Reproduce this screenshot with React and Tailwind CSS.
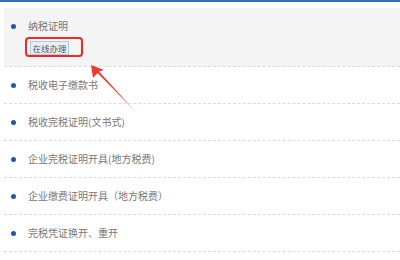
import React from 'react';

const rows = [
  '税收电子缴款书',
  '税收完税证明(文书式)',
  '企业完税证明开具(地方税费)',
  '企业缴费证明开具（地方税费）',
  '完税凭证换开、重开',
];

const Bullet = () => <span className="w-[5px] h-[5px] rounded-full bg-[#2356a8] shrink-0" />;

const App = () => {
  return (
    <div className="relative w-[400px] h-[260px] bg-white overflow-hidden" style={{ fontFamily: '"Noto Sans CJK SC", "Noto Sans", sans-serif' }}>
      <div className="h-[2px] bg-[#3a69b8]" />

      <div className="mt-[6px] ml-[4px]">
        {/* first item, highlighted */}
        <div className="bg-[#f4f4f4] h-[59px] border-b border-dashed border-[#dcdcdc] pl-[7px] pt-[11px]">
          <div className="flex items-center h-[14px]">
            <Bullet />
            <span className="ml-[12px] text-[10px] leading-[14px] text-[#777]">纳税证明</span>
          </div>
          <div className="mt-[4px] ml-[14px] w-[58px] h-[20px] border-2 border-[#f02a22] rounded-[4px] px-[3px] py-[2px]">
            <div className="w-[39px] h-[14px] bg-[#e9eff6] border border-[#a9cbe8] flex items-center justify-center text-[8.5px] leading-none text-[#555]">
              在线办理
            </div>
          </div>
        </div>

        {rows.map((r) => (
          <div key={r} className="h-[37px] border-b border-dashed border-[#dcdcdc] pl-[7px] flex items-center">
            <Bullet />
            <span className="ml-[12px] text-[10px] leading-[14px] text-[#777]">{r}</span>
          </div>
        ))}
      </div>

      {/* annotation arrow */}
      <svg className="absolute left-0 top-0" width="400" height="260" viewBox="0 0 400 260">
        <polygon points="91,65 104,70 99,71.5 134,110 97.5,73 93,78" fill="#f23a2a" />
      </svg>
    </div>
  );
};

export default App;
